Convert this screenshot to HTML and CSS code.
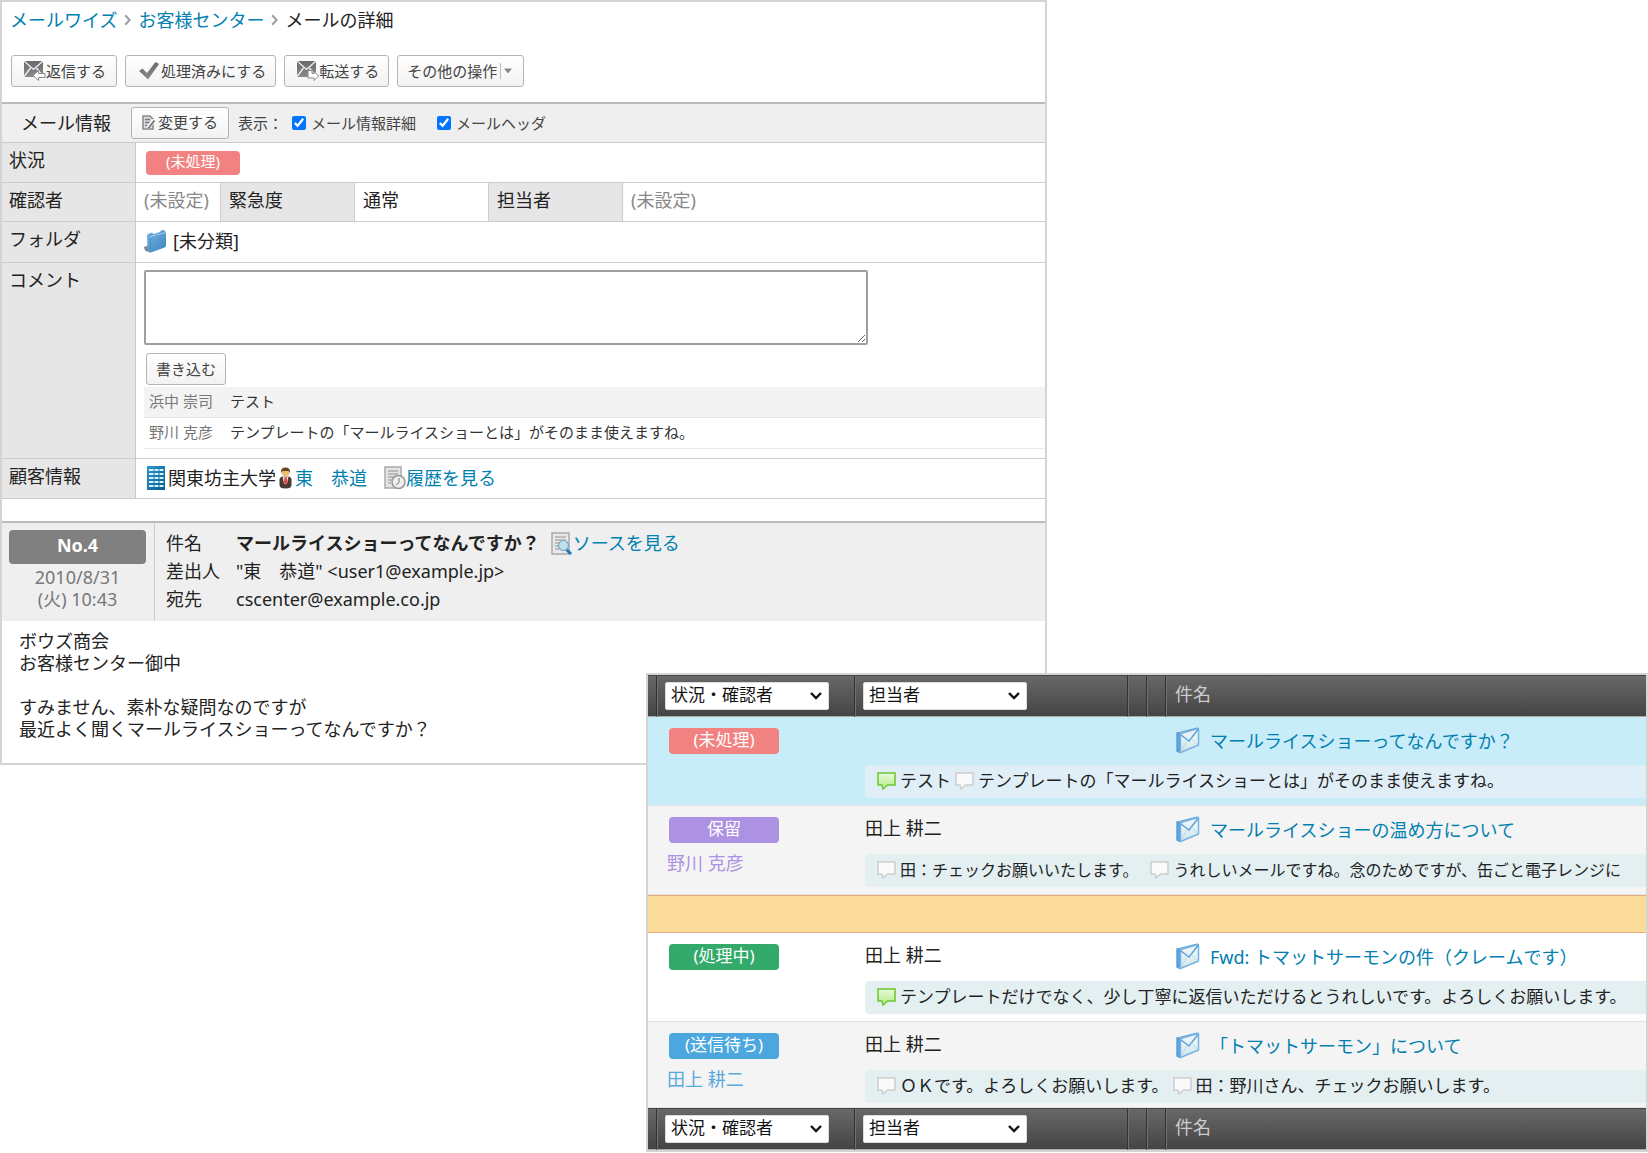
FILE: index.html
```html
<!DOCTYPE html>
<html lang="ja">
<head>
<meta charset="utf-8">
<meta name="viewport" content="width=device-width, initial-scale=1">
<title>メールの詳細 - メールワイズ</title>
<link rel="stylesheet" href="styles.css">
</head>
<body>
<svg class="defs" aria-hidden="true">
  <defs>
    <linearGradient id="g-green" x1="0" y1="0" x2="0" y2="1"><stop offset="0" stop-color="#e9f9dc"/><stop offset="1" stop-color="#b3ec85"/></linearGradient>
    <linearGradient id="g-folder" x1="0" y1="0" x2="1" y2="1"><stop offset="0" stop-color="#76b2de"/><stop offset="1" stop-color="#3a86c0"/></linearGradient>
    <linearGradient id="g-mail" x1="0" y1="0" x2="0" y2="1"><stop offset="0" stop-color="#f4fafc"/><stop offset="1" stop-color="#cfe6ea"/></linearGradient>
    <linearGradient id="g-build" x1="0" y1="0" x2="1" y2="1"><stop offset="0" stop-color="#2f97cf"/><stop offset="1" stop-color="#005c94"/></linearGradient>
    <linearGradient id="g-gray" x1="0" y1="0" x2="0" y2="1"><stop offset="0" stop-color="#6a6a6a"/><stop offset="1" stop-color="#8a8a8a"/></linearGradient>
    <symbol id="i-mail" viewBox="0 0 24 27">
      <path d="M1 6 4.500 7V25.500L1 24z" fill="#5aa3da" stroke="#5aa3da" stroke-width="1.500" stroke-linejoin="round"/>
      <path d="M1 6 21 1 22.500 1.500 4.500 7z" fill="#a5cbe8" stroke="#5aa3da" stroke-linejoin="round"/>
      <path d="M4.500 7 22.500 1.500V18L4.500 25.500z" fill="url(#g-mail)" stroke="#78b3df" stroke-width="1.500" stroke-linejoin="round"/>
      <path d="M4.500 7.500 13 14 22 2.500" fill="#eaf4f8" stroke="#5aa3da" stroke-width="1.500"/>
      <path d="M5 24.500 11 13M22 17.500 15.500 11.500" fill="none" stroke="#bcdcec"/>
    </symbol>
    <symbol id="i-bubble-green" viewBox="0 0 19 18">
      <path d="M1 1H18V13H10.500L6 17 5 13H1z" fill="url(#g-green)" stroke="#6cc62f" stroke-width="1.500"/>
    </symbol>
    <symbol id="i-bubble" viewBox="0 0 19 18">
      <path d="M1 1H18V13H10.500L6 17 5 13H1z" fill="#fafafa" stroke="#cdcdcd" stroke-width="1.500"/>
    </symbol>
    <symbol id="i-env" viewBox="0 0 22 20">
      <path d="M0 0H19V16H0z" fill="url(#g-gray)"/>
      <path d="M0 0 9.500 8.500 19 0M0 15.500 6.500 7M19 15.500 12.500 7" fill="none" stroke="#f4f4f4" stroke-width="1.300"/>
    </symbol>
  </defs>
</svg>
<div class="stage">
  <main class="panel detail">
    <nav class="crumbs" aria-label="パンくず">
      <a href="#">メールワイズ</a>
      <svg class="chev" viewBox="0 0 6 10"><path d="M1 1 4.800 5 1 9" fill="none" stroke="#a0a0a0" stroke-width="1.800"/></svg>
      <a href="#">お客様センター</a>
      <svg class="chev" viewBox="0 0 6 10"><path d="M1 1 4.800 5 1 9" fill="none" stroke="#a0a0a0" stroke-width="1.800"/></svg>
      <span>メールの詳細</span>
    </nav>
    <div class="toolbar">
      <button type="button" class="btn">
        <svg width="22" height="20" viewBox="0 0 22 20"><use href="#i-env"/><path d="M9 14.500 14.500 9.500V12.500H21V16.500H14.500V19.500z" fill="#fff" stroke="#888"/></svg>返信する</button>
      <button type="button" class="btn btn-check">
        <svg width="20" height="18" viewBox="0 0 20 18"><path d="M0 9 3.500 6.500 8 11 16.500 0 20 2 9 17.500z" fill="url(#g-gray)"/></svg>処理済みにする</button>
      <button type="button" class="btn">
        <svg width="22" height="20" viewBox="0 0 22 20"><use href="#i-env"/><path d="M11 9.500H15V12.500H17V10.500L21.500 15 17 19.500V17H11z" fill="#fff" stroke="#888"/></svg>転送する</button>
      <button type="button" class="btn btn-menu">その他の操作<svg width="14" height="16" viewBox="0 0 14 16"><path d="M1.500 0V16" stroke="#bbb"/><path d="M5 5.500H13L9 10.500z" fill="#888"/></svg></button>
    </div>
    <section class="info">
      <header class="info-head">
        <h2>メール情報</h2>
        <button type="button" class="btn btn-edit">
          <svg width="14" height="15" viewBox="0 0 14 15"><path d="M1 1H8L11 4V14H1z" fill="#ddd" stroke="#888" stroke-width="1.500"/><path d="M3 4.500H8M3 7.500H8M3 10.500H6" stroke="#777" stroke-width="1.300"/><path d="M6 12.500 12.500 5" stroke="#fff" stroke-width="4"/><path d="M6.500 13 12.500 5.500" stroke="#777" stroke-width="2"/></svg>変更する</button>
        <span class="show">表示：</span>
        <label class="check"><input type="checkbox" checked>メール情報詳細</label>
        <label class="check"><input type="checkbox" checked>メールヘッダ</label>
      </header>
      <table class="props">
        <colgroup><col class="p-name"><col class="p-a"><col class="p-b"><col class="p-b"><col class="p-b"><col></colgroup>
        <tr><th scope="row">状況</th><td colspan="5"><span class="badge small red">(未処理)</span></td></tr>
        <tr class="split"><th scope="row">確認者</th><td class="unset">(未設定)</td><th scope="row">緊急度</th><td>通常</td><th scope="row">担当者</th><td class="unset">(未設定)</td></tr>
        <tr class="folder"><th scope="row">フォルダ</th><td colspan="5"><div class="line">
          <svg width="23" height="23" viewBox="0 0 23 23"><path d="M0 17 4 15.500V22L1 20.500z" fill="#7b8790"/><path d="M3 6Q3 4 5 3.500L8 2.500 9.500 4 16 2 17 .5 20 0 22 2.500V15.500Q22 17 20.500 17.500L7 22.500Q4 23 3.500 20z" fill="url(#g-folder)"/><path d="M6.500 8Q6.500 6.500 8 6L22 2.500" fill="none" stroke="#a2cdea"/><path d="M6.500 8V22" stroke="#4a90c4"/></svg>
          <span>[未分類]</span></div></td></tr>
        <tr class="comment"><th scope="row"><label for="comment">コメント</label></th><td colspan="5">
          <textarea id="comment"></textarea>
          <button type="button" class="btn btn-write">書き込む</button>
          <ul class="thread">
            <li><span>浜中 崇司</span>テスト</li>
            <li><span>野川 克彦</span>テンプレートの「マールライスショーとは」がそのまま使えますね。</li>
          </ul></td></tr>
        <tr><th scope="row">顧客情報</th><td colspan="5"><div class="line customer">
          <svg width="18" height="24" viewBox="0 0 18 24"><path d="M0 0H18V24H0z" fill="url(#g-build)"/><path d="M2 4H6.500M7.500 4H11.500M12.500 4H16.500M2 8H6.500M7.500 8H11.500M12.500 8H16.500M2 12H6.500M7.500 12H11.500M12.500 12H16.500M2 16H6.500M7.500 16H11.500M12.500 16H16.500M2 20H6.500M7.500 20H11.500M12.500 20H16.500" stroke="#d9effa" stroke-width="2"/></svg>
          <span>関東坊主大学</span>
          <svg width="13" height="22" viewBox="0 0 13 22"><path d="M.5 13Q.5 9.500 4 9.500H9Q12.500 9.500 12.500 13V18Q12.500 21.500 6.500 21.500T.5 18z" fill="#4a3a34"/><path d="M3.500 9.500H9.500L8 17H5z" fill="#f4dcdc"/><path d="M5.700 10H7.500L8.500 15.500 6.500 18 4.800 15.500z" fill="#e04848"/><circle cx="6.500" cy="5.500" r="3.800" fill="#eebb77"/><path d="M2 6Q1.500 .5 6.500 .5T11 6L9.500 4H3.500z" fill="#6a4420"/></svg>
          <a href="#">東　恭道</a>
          <svg class="hist" width="22" height="24" viewBox="0 0 22 24"><path d="M1 1H17V22H1z" fill="#e4e4e4" stroke="#aaa" stroke-width="1.500"/><path d="M4 5H14M4 8H14M4 11H10M4 14H8M4 17H7" stroke="#8c8c8c"/><circle cx="14.500" cy="16" r="6.500" fill="#eee" stroke="#999" stroke-width="1.500"/><path d="M15 12V16.500L12 19" fill="none" stroke="#777"/></svg>
          <a href="#">履歴を見る</a></div></td></tr>
      </table>
    </section>
    <article class="message">
      <header class="msg-head">
        <div class="stamp"><strong>No.4</strong><time datetime="2010-08-31T10:43">2010/8/31<br>(火) 10:43</time></div>
        <dl class="fields">
          <dt>件名</dt><dd><b>マールライスショーってなんですか？</b>
            <svg width="22" height="23" viewBox="0 0 22 23"><path d="M1 1H18V22H1z" fill="#e8e8e8" stroke="#aaa" stroke-width="1.500"/><path d="M4 5H15M4 8H15M4 11H9M4 14H8M4 17H8" stroke="#909090"/><path d="M15 17 20 22" stroke="#1d7bb5" stroke-width="3"/><circle cx="12.500" cy="13.500" r="5" fill="#bfe0ee" stroke="#7aa9c2" stroke-width="1.200"/></svg><a href="#">ソースを見る</a></dd>
          <dt>差出人</dt><dd>"東　恭道" &lt;user1@example.jp&gt;</dd>
          <dt>宛先</dt><dd>cscenter@example.co.jp</dd>
        </dl>
      </header>
      <p class="msg-body">ボウズ商会<br>お客様センター御中<br><br>すみません、素朴な疑問なのですが<br>最近よく聞くマールライスショーってなんですか？</p>
    </article>
  </main>

  <section class="panel list" aria-label="メール一覧">
    <table class="mails">
      <colgroup><col class="c-edge"><col class="c-status"><col class="c-owner"><col class="c-mark"><col class="c-mark"><col></colgroup>
      <thead>
        <tr class="bar"><th></th><th><select aria-label="状況・確認者"><option>状況・確認者</option></select></th><th><select aria-label="担当者"><option>担当者</option></select></th><th></th><th></th><th class="subject">件名</th></tr>
      </thead>
      <tbody class="selected">
        <tr class="top"><td rowspan="2"></td><td rowspan="2" class="status"><span class="badge red">(未処理)</span></td><td></td><td></td><td></td><td class="subject"><a href="#"><svg width="24" height="27"><use href="#i-mail"/></svg>マールライスショーってなんですか？</a></td></tr>
        <tr class="sub"><td colspan="4"><div class="notes"><svg width="19" height="18"><use href="#i-bubble-green"/></svg>テスト<svg width="19" height="18"><use href="#i-bubble"/></svg>テンプレートの「マールライスショーとは」がそのまま使えますね。</div></td></tr>
      </tbody>
      <tbody class="alt">
        <tr class="top"><td rowspan="2"></td><td rowspan="2" class="status"><span class="badge purple">保留</span><span class="who lilac">野川 克彦</span></td><td class="owner">田上 耕二</td><td></td><td></td><td class="subject"><a href="#"><svg width="24" height="27"><use href="#i-mail"/></svg>マールライスショーの温め方について</a></td></tr>
        <tr class="sub"><td colspan="4"><div class="notes dense"><svg width="19" height="18"><use href="#i-bubble"/></svg>田：チェックお願いいたします。　<svg width="19" height="18"><use href="#i-bubble"/></svg>うれしいメールですね。念のためですが、缶ごと電子レンジに</div></td></tr>
      </tbody>
      <tbody class="band"><tr><td colspan="6"></td></tr></tbody>
      <tbody>
        <tr class="top"><td rowspan="2"></td><td rowspan="2" class="status"><span class="badge green">(処理中)</span></td><td class="owner">田上 耕二</td><td></td><td></td><td class="subject"><a href="#"><svg width="24" height="27"><use href="#i-mail"/></svg>Fwd: トマットサーモンの件（クレームです）</a></td></tr>
        <tr class="sub"><td colspan="4"><div class="notes"><svg width="19" height="18"><use href="#i-bubble-green"/></svg>テンプレートだけでなく、少し丁寧に返信いただけるとうれしいです。よろしくお願いします。</div></td></tr>
      </tbody>
      <tbody class="alt last">
        <tr class="top"><td rowspan="2"></td><td rowspan="2" class="status"><span class="badge blue">(送信待ち)</span><span class="who sky">田上 耕二</span></td><td class="owner">田上 耕二</td><td></td><td></td><td class="subject"><a href="#"><svg width="24" height="27"><use href="#i-mail"/></svg>「トマットサーモン」について</a></td></tr>
        <tr class="sub"><td colspan="4"><div class="notes"><svg width="19" height="18"><use href="#i-bubble"/></svg>ＯＫです。よろしくお願いします。<svg width="19" height="18"><use href="#i-bubble"/></svg>田：野川さん、チェックお願いします。</div></td></tr>
      </tbody>
      <tfoot>
        <tr class="bar"><th></th><th><select aria-label="状況・確認者"><option>状況・確認者</option></select></th><th><select aria-label="担当者"><option>担当者</option></select></th><th></th><th></th><th class="subject">件名</th></tr>
      </tfoot>
    </table>
  </section>
</div>
</body>
</html>
```
FILE: styles.css
```css
* { box-sizing: border-box; }

body {
  margin: 0;
  background: #fff;
  color: #222;
  font: 18px/22px "Noto Sans", "Noto Sans CJK JP", sans-serif;
}

a { color: #0080b0; text-decoration: none; }
svg { display: block; flex: none; }
button, select, textarea, input { font-family: inherit; }
table { width: 100%; border-spacing: 0; table-layout: fixed; }
td, th { padding: 0; font-weight: 400; text-align: left; vertical-align: top; }
.defs { position: absolute; width: 0; height: 0; }

/* The two windows overlap: the list lies over the lower right of the detail. */
.stage { display: grid; grid-template-columns: 646fr 401fr 601fr; }
.panel { border: 2px solid #d4d4d4; background: #fff; min-width: 0; }
.detail { grid-column: 1 / 3; }
.list { grid-column: 2 / 4; margin-top: -92px; z-index: 1; overflow: hidden; }

/* Breadcrumb and toolbar */
.crumbs { display: flex; align-items: center; gap: 7px; padding: 7px 8px 0; }
.chev { width: 7px; height: 12px; }

.toolbar { display: flex; gap: 8px; padding: 24px 9px 15px; }
.btn {
  display: flex; align-items: center; justify-content: center;
  height: 32px; padding: 0 9px 1px;
  border: 1px solid #b4b4b4; border-radius: 3px;
  background: linear-gradient(#fff, #f2f2f2);
  color: #444; font-size: 15px; line-height: 20px; white-space: nowrap;
}
.toolbar .btn { padding: 0 9px 1px 12px; }
.toolbar .btn:first-child { padding-right: 10px; }
.toolbar .btn-check { gap: 2px; padding-left: 13px; }
.toolbar .btn-menu { gap: 2px; padding: 0 10px 1px 9px; }

/* Mail information */
.info-head {
  display: flex; align-items: center; height: 41px; padding: 0 0 1px 19px;
  border-top: 2px solid #bbb; border-bottom: 1px solid #ccc;
  background: #efefef;
}
.info-head h2 { margin: 0 20px 0 0; font-size: 18px; font-weight: 400; }
.btn-edit { gap: 2px; padding: 0 10px 1px; margin-right: 9px; }
.show { font-size: 15px; color: #444; margin-right: 9px; }
.check { display: flex; align-items: center; gap: 5px; margin-right: 21px; font-size: 15px; color: #444; }
.check input { width: 14px; height: 14px; margin: 0; accent-color: #0075ff; }

.p-name { width: 134px; }
.p-a { width: 85px; }
.p-b { width: 134px; }
.props th { padding: 6px 0 0 7px; border-right: 1px solid #c8c8c8; border-bottom: 1px solid #ccc; background: #e6e6e6; }
.props td { height: 40px; padding: 7px 0 0 8px; border-bottom: 1px solid #ccc; }
.props .split th, .props .split td { height: 39px; padding: 6px 0 0 8px; border-right: 1px solid #ccc; }
.props .split th:first-child { padding-left: 7px; }
.props .split td:last-child { border-right: 0; }
.props .folder td { height: 41px; }
.props .comment td { height: 196px; }
.props .unset { color: #888; }
.line { display: flex; align-items: center; gap: 6px; height: 24px; }
.customer { gap: 3px; padding-left: 3px; }
.customer .hist { margin-left: 14px; margin-right: -3px; }

.badge {
  display: block; width: 110px; height: 26px; border-radius: 4px;
  color: #fff; font-size: 17px; line-height: 23px; text-align: center;
}
.badge.small { width: 94px; height: 24px; margin: 1px 2px; font-size: 15px; line-height: 21px; }
.red { background: #f28282; }
.purple { background: #ad91e2; }
.green { background: #33aa69; }
.blue { background: #4ba7dd; }

textarea {
  display: block; width: 724px; max-width: 98%; height: 75px; margin: 0 0 8px;
  border: 2px solid #a0a0a0; border-radius: 2px; background: #fff;
}
.btn-write { margin-left: 2px; }
.thread { margin: 2px 0 0; padding: 0; list-style: none; font-size: 15px; color: #333; }
.thread li { height: 31px; padding: 3px 0 0 5px; border-bottom: 1px solid #e8e8e8; line-height: 22px; }
.thread li:first-child { background: #f3f3f3; }
.thread span { display: inline-block; width: 81px; color: #777; }

/* Message */
.message { margin-top: 22px; border-top: 2px solid #bbb; }
.msg-head { display: flex; background: #efefef; }
.stamp { width: 153px; padding: 7px 8px 8px 7px; border-right: 1px solid #ccc; text-align: center; color: #777; }
.stamp strong { display: block; height: 34px; margin-bottom: 2px; border-radius: 4px; background: #808080; color: #fff; line-height: 31px; }
.fields { flex: 1; display: grid; grid-template-columns: 70px 1fr; grid-auto-rows: 28px; margin: 0; padding: 6px 0 8px 11px; line-height: 28px; }
.fields dd { display: flex; align-items: center; margin: 0; }
.fields dd svg { margin: 0 0 0 11px; }
.msg-body { margin: 0; padding: 9px 17px 23px; }

/* Mail list */
.c-edge { width: 9px; }
.c-status { width: 198px; }
.c-owner { width: 273px; }
.c-mark { width: 19px; }
.bar th {
  height: 42px; padding: 6px 0 0 7px;
  border-top: 1px solid #444; border-bottom: 1px solid #aaa;
  border-right: 1px solid #333; border-left: 1px solid #707070;
  background: linear-gradient(#686868, #444); color: #ccc;
}
.bar th:first-child { border-left: 0; }
.bar th:last-child { border-right: 0; }
.bar .subject { padding: 7px 0 0 8px; }
select {
  display: block; width: 164px; height: 28px; padding: 0 24px 2px 5px;
  appearance: none; border: 1px solid #ddd; border-radius: 2px;
  background: #fff url("data:image/svg+xml,%3Csvg xmlns='http://www.w3.org/2000/svg' width='12' height='8'%3E%3Cpath d='M1 1l5 5 5-5' fill='none' stroke='%23111' stroke-width='2.400'/%3E%3C/svg%3E") no-repeat right 6px center;
  color: #111; font-size: 17px; line-height: 22px;
}
.top { height: 48px; }
.top td { padding-top: 11px; }
.sub { height: 41px; }
.mails tbody td { border-bottom: 1px solid #e2e2e2; }
.mails .top td:not([rowspan]) { border-bottom: 0; }
.selected { background: #c8ecf8; }
.alt { background: #f4f4f4; }
.band td { height: 38px; border-top: 1px solid #e3ab80; background: #fbdb9a; }
.mails .band td { border-bottom-color: #e3ab80; }
.mails .status { padding-left: 12px; }
.who { display: block; margin-top: 9px; margin-left: -2px; }
.lilac { color: #ad91e2; }
.sky { color: #5aa9dd; }
.owner { padding-left: 10px; }
.top .subject { padding: 10px 0 0 10px; }
.subject a { display: flex; align-items: center; gap: 10px; height: 27px; white-space: nowrap; }
.notes {
  display: flex; align-items: center; gap: 4px; height: 33px;
  margin-left: 10px; padding: 0 0 2px 12px; border-radius: 4px 0 0 4px;
  background: #e4eff2; color: #222; font-size: 17px; white-space: nowrap; overflow: hidden;
}
.notes.dense { font-size: 16px; white-space: pre; }
.selected .notes { background: #e0eff7; }
.last .sub { height: 38px; }
```
